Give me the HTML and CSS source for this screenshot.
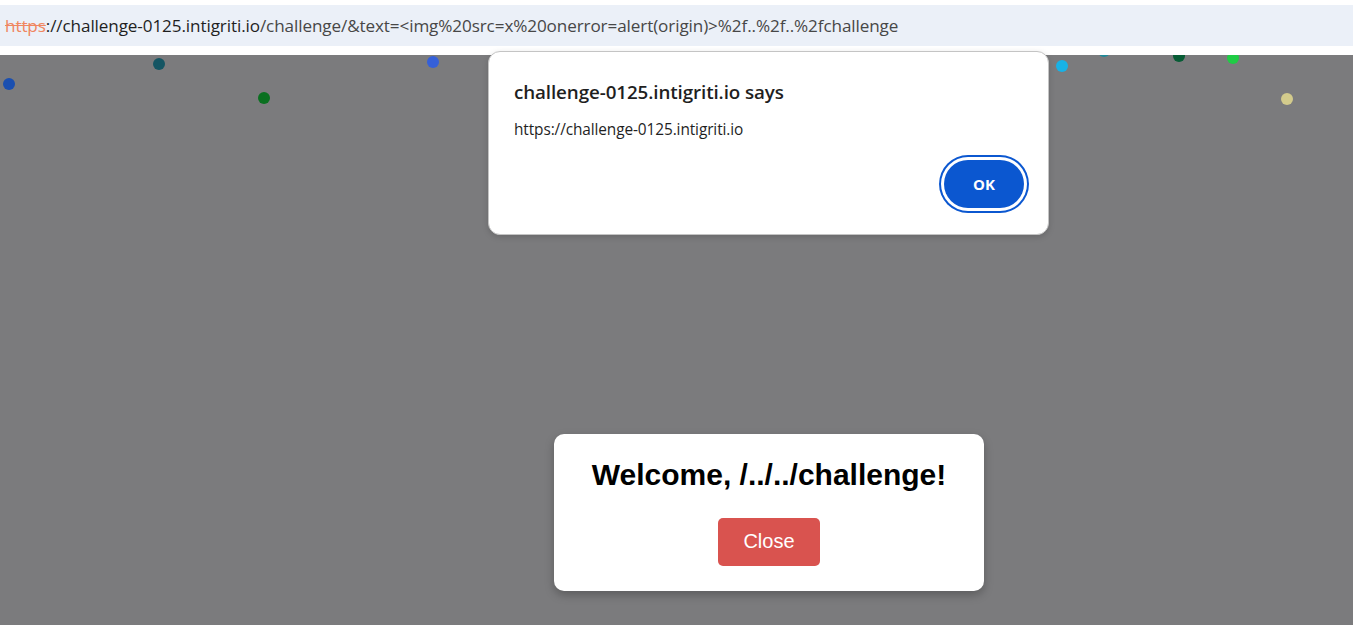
FILE: index.html
```html
<!DOCTYPE html>
<html>
<head>
<meta charset="utf-8">
<link rel="stylesheet" href="styles.css">
</head>
<body>
<div class="topgap"></div>
<div class="urlbar">
  <span class="scheme">https</span><span class="host">://challenge-0125.intigriti.io</span><span class="path">/challenge/&amp;text=&lt;img%20src=x%20onerror=alert(origin)&gt;%2f..%2f..%2fchallenge</span>
</div>
<div class="bargap"></div>
<main class="page">
  <span class="dot" style="left:3px;top:23px;background:#1a4fb0"></span>
  <span class="dot" style="left:153px;top:3px;background:#145563"></span>
  <span class="dot" style="left:258px;top:37px;background:#0a7020"></span>
  <span class="dot" style="left:427px;top:1px;background:#3560d8"></span>
  <span class="dot" style="left:1056px;top:5px;background:#18b2e6"></span>
  <span class="dot" style="left:1098px;top:-10px;background:#1f8a99"></span>
  <span class="dot" style="left:1173px;top:-5px;background:#075c35"></span>
  <span class="dot" style="left:1227px;top:-3px;background:#1fcc45"></span>
  <span class="dot" style="left:1281px;top:38px;background:#d3cb8c"></span>

  <div class="welcome">
    <h2 class="welcome-title">Welcome, /../../challenge!</h2>
    <button class="close-btn">Close</button>
  </div>
</main>

<div class="alert">
  <div class="alert-title">challenge-0125.intigriti.io says</div>
  <div class="alert-msg">https://challenge-0125.intigriti.io</div>
  <div class="alert-actions">
    <button class="ok-btn">OK</button>
  </div>
</div>
</body>
</html>
```
FILE: styles.css
```css
html, body {
  margin: 0;
  padding: 0;
  height: 100%;
  overflow: hidden;
}
body {
  background: #ffffff;
  font-family: "Open Sans", "Noto Sans", sans-serif;
  position: relative;
}
.topgap {
  height: 5px;
  background: #ffffff;
}
.urlbar {
  height: 41px;
  background: #ebf0f8;
  display: flex;
  align-items: center;
  padding-left: 5px;
  font-size: 17.1px;
  white-space: nowrap;
  letter-spacing: -0.1px;
}
.scheme {
  color: #f08660;
  text-decoration: line-through;
}
.host {
  color: #1f1f1f;
}
.path {
  color: #474747;
}
.bargap {
  height: 9px;
  background: #ffffff;
}
.page {
  position: relative;
  height: 570px;
  background: #7b7b7d;
  overflow: hidden;
}
.dot {
  position: absolute;
  width: 12px;
  height: 12px;
  border-radius: 50%;
}
.welcome {
  position: absolute;
  left: 554px;
  top: 379px;
  width: 430px;
  height: 157px;
  box-sizing: border-box;
  background: #ffffff;
  border-radius: 10px;
  box-shadow: 0 4px 10px rgba(0,0,0,0.25);
  display: flex;
  flex-direction: column;
  align-items: center;
  padding-top: 23px;
  font-family: "Liberation Sans", Arial, sans-serif;
}
.welcome-title {
  margin: 0;
  font-size: 30px;
  font-weight: bold;
  color: #000;
  line-height: 36px;
}
.close-btn {
  margin-top: 25px;
  width: 102px;
  height: 48px;
  border: none;
  border-radius: 5px;
  background: #d9534f;
  color: #ffffff;
  font-family: "Liberation Sans", Arial, sans-serif;
  font-size: 20px;
  padding: 0 0 2px;
}
.alert {
  position: absolute;
  left: 488px;
  top: 51px;
  width: 561px;
  height: 184px;
  box-sizing: border-box;
  background: #ffffff;
  border: 1px solid #c4c4c4;
  border-radius: 12px;
  box-shadow: 0 2px 6px rgba(0,0,0,0.15);
  padding: 27px 22px 0 25px;
  display: flex;
  flex-direction: column;
}
.alert-title {
  font-size: 18.8px;
  font-weight: 600;
  color: #1f1f1f;
  line-height: 26px;
  letter-spacing: -0.1px;
}
.alert-msg {
  margin-top: 14px;
  font-size: 15.4px;
  color: #1f1f1f;
  line-height: 22px;
  letter-spacing: -0.1px;
}
.alert-actions {
  display: flex;
  justify-content: flex-end;
  margin-top: 19px;
}
.ok-btn {
  width: 80px;
  height: 48px;
  border-radius: 24px;
  background: #0b57d0;
  color: #ffffff;
  border: none;
  font-family: "Open Sans", "Noto Sans", sans-serif;
  font-weight: 700;
  font-size: 15px;
  box-shadow: 0 0 0 3px #ffffff, 0 0 0 5px #0b57d0;
  margin-right: 2px;
}
```
